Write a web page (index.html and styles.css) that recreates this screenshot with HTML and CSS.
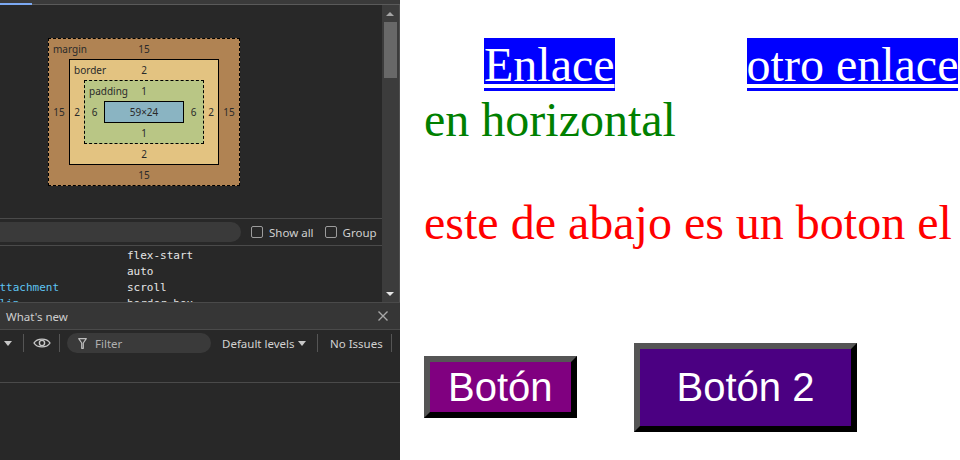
FILE: index.html
```html
<!DOCTYPE html>
<html lang="es">
<head>
<meta charset="utf-8">
<title>Enlaces</title>
<link rel="stylesheet" href="styles.css">
</head>
<body>
<div class="devtools">
  <div class="tabs"><div class="tab-active"></div><div class="tab-rest"></div></div>
  <div class="pane">
    <div class="pane-main">
      <div class="bm-area">
        <div class="bm bm-margin">
          <div class="bm-top"><span class="bm-label">margin</span><span>15</span><span></span></div>
          <div class="bm-side">15</div>
          <div class="bm bm-border">
            <div class="bm-top"><span class="bm-label">border</span><span>2</span><span></span></div>
            <div class="bm-side">2</div>
            <div class="bm bm-padding">
              <div class="bm-top"><span class="bm-label">padding</span><span>1</span><span></span></div>
              <div class="bm-side">6</div>
              <div class="bm-content">59×24</div>
              <div class="bm-side">6</div>
              <div class="bm-bottom">1</div>
            </div>
            <div class="bm-side">2</div>
            <div class="bm-bottom">2</div>
          </div>
          <div class="bm-side">15</div>
          <div class="bm-bottom">15</div>
        </div>
      </div>
      <div class="filter-row">
        <div class="filter-input"></div>
        <label class="check"><span class="box"></span>Show all</label>
        <label class="check"><span class="box"></span>Group</label>
      </div>
      <div class="props">
        <div class="prop"><span class="pname">align-self</span><span class="pval">flex-start</span></div>
        <div class="prop"><span class="pname">aspect-ratio</span><span class="pval">auto</span></div>
        <div class="prop"><span class="pname">background-attachment</span><span class="pval">scroll</span></div>
        <div class="prop"><span class="pname">background-clip</span><span class="pval">border-box</span></div>
      </div>
    </div>
    <div class="scrollbar">
      <div class="sb-btn"><span class="tri-up"></span></div>
      <div class="sb-thumb"></div>
      <div class="sb-space"></div>
      <div class="sb-btn"><span class="tri-down light"></span></div>
    </div>
  </div>
  <div class="drawer-head">
    <span>What's new</span>
    <svg class="close" width="10" height="10" viewBox="0 0 10 10"><path d="M0.5 0.5 L9.5 9.5 M9.5 0.5 L0.5 9.5" stroke="#a8a8a8" stroke-width="1.4" fill="none"/></svg>
  </div>
  <div class="console-bar">
    <div class="tool-row">
      <span class="tri-down small"></span>
      <span class="sep s1"></span>
      <svg class="eye" width="18" height="12" viewBox="0 0 18 12"><path d="M1 6 C4 0.8 14 0.8 17 6 C14 11.2 4 11.2 1 6 Z" stroke="#c8c8c8" stroke-width="1.4" fill="none"/><circle cx="9" cy="6" r="2.6" stroke="#c8c8c8" stroke-width="1.4" fill="none"/></svg>
      <span class="sep s2"></span>
      <div class="cfilter">
        <svg width="9" height="11" viewBox="0 0 9 11"><path d="M0.7 0.7 H8.3 L5.3 5 V10.3 H3.7 V5 Z" stroke="#bdbdbd" stroke-width="1.2" fill="none" stroke-linejoin="round"/></svg>
        <span class="ph">Filter</span>
      </div>
      <span class="levels">Default levels</span>
      <span class="tri-down small lv"></span>
      <span class="sep s3"></span>
      <span class="issues">No Issues</span>
      <span class="sep s4"></span>
    </div>
  </div>
  <div class="console-body"></div>
</div>
<div class="page">
  <div class="links"><a class="link" href="#">Enlace</a> <a class="link" href="#">otro enlace</a></div>
  <div class="green">en horizontal</div>
  <p class="red">este de abajo es un boton el</p>
  <div class="buttons">
    <button class="btn btn1">Botón</button>
    <button class="btn btn2">Botón 2</button>
  </div>
</div>
</body>
</html>
```

FILE: styles.css
```css
* { box-sizing: border-box; }
html, body { margin: 0; padding: 0; }
body {
  width: 960px;
  height: 460px;
  overflow: hidden;
  display: flex;
  background: #ffffff;
}

/* ---------- devtools ---------- */
.devtools {
  width: 400px;
  flex: none;
  height: 460px;
  background: #282828;
  display: flex;
  flex-direction: column;
  font-family: "Noto Sans", "DejaVu Sans", sans-serif;
  font-size: 11.5px;
  color: #d2d2d2;
  overflow: hidden;
}
.tabs {
  height: 5px;
  flex: none;
  display: flex;
  align-items: flex-end;
  background: #3a3a3a;
}
.tab-active { width: 32px; height: 2px; background: #7ca9f2; }
.tab-rest { flex: 1; height: 1px; background: #5a5a5a; }

.pane { height: 297px; flex: none; display: flex; }
.pane-main { flex: 1; display: flex; flex-direction: column; min-width: 0; }

.bm-area {
  height: 214px;
  flex: none;
  padding: 33px 0 0 48px;
  border-bottom: 1px solid #4a4a4a;
}
.bm {
  display: grid;
  color: #2a2a2a;
  font-size: 10px;
  line-height: 12px;
}
.bm-margin {
  width: 192px;
  height: 148px;
  background: #b08353;
  border: 1px dashed #000;
  grid-template-columns: 20px 150px 20px;
  grid-template-rows: 20px 106px 20px;
}
.bm-border {
  background: #e3c381;
  border: 1px solid #000;
  grid-template-columns: 14px 120px 14px;
  grid-template-rows: 20px 64px 20px;
}
.bm-padding {
  background: #b9c685;
  border: 1px dashed #000;
  grid-template-columns: 19px 80px 19px;
  grid-template-rows: 20px 22px 20px;
}
.bm-top {
  grid-column: 1 / 4;
  display: grid;
  grid-template-columns: 1fr auto 1fr;
  align-items: center;
}
.bm-label { padding-left: 4px; }
.bm-side {
  display: flex;
  align-items: center;
  justify-content: center;
}
.bm-bottom {
  grid-column: 1 / 4;
  display: flex;
  align-items: center;
  justify-content: center;
}
.bm-content {
  background: #8ab4c2;
  border: 1px solid #000;
  display: flex;
  align-items: center;
  justify-content: center;
  color: #2a2a2a;
}

.filter-row {
  height: 27px;
  flex: none;
  display: flex;
  align-items: center;
  border-bottom: 1px solid #4a4a4a;
}
.filter-input {
  width: 253px;
  height: 20px;
  margin-left: -12px;
  border-radius: 10px;
  background: #3a3a3a;
  flex: none;
}
.check {
  display: flex;
  align-items: center;
  margin-left: 10px;
  color: #d0d0d0;
  white-space: nowrap;
}
.check + .check { margin-left: 11px; }
.box {
  width: 12px;
  height: 12px;
  border: 1px solid #9c9c9c;
  border-radius: 2px;
  margin-right: 6px;
}

.props {
  height: 56px;
  flex: none;
  overflow: hidden;
  padding-top: 2px;
  font-family: "DejaVu Sans Mono", "Liberation Mono", monospace;
  font-size: 11px;
  line-height: 16px;
}
.prop {
  display: grid;
  grid-template-columns: 207px 1fr;
  margin-left: -80px;
  white-space: nowrap;
}
.pname { color: #5ec4f2; }
.pval { color: #e6e6e6; }

.scrollbar {
  width: 18px;
  flex: none;
  background: #3c3c3c;
  border-right: 1px solid #505050;
  display: flex;
  flex-direction: column;
}
.sb-btn {
  height: 17px;
  flex: none;
  display: flex;
  align-items: center;
  justify-content: center;
  padding-right: 1px;
}
.sb-thumb {
  height: 56px;
  flex: none;
  margin: 0 2px 0 2px;
  background: #686868;
}
.sb-space { flex: 1; }
.tri-up {
  width: 0;
  height: 0;
  border-left: 4px solid transparent;
  border-right: 4px solid transparent;
  border-bottom: 4px solid #a5a5a5;
}
.tri-down {
  width: 0;
  height: 0;
  border-left: 4px solid transparent;
  border-right: 4px solid transparent;
  border-top: 4px solid #a5a5a5;
}
.tri-down.light { border-top-color: #e6e6e6; }
.tri-down.small { border-top: 5px solid #c8c8c8; flex: none; }

.drawer-head {
  height: 28px;
  flex: none;
  display: flex;
  align-items: center;
  justify-content: space-between;
  padding: 0 12px 0 6px;
  background: #363636;
  border-top: 1px solid #4a4a4a;
  border-bottom: 1px solid #4a4a4a;
  color: #cfcfcf;
}

.console-bar {
  height: 53px;
  flex: none;
  border-bottom: 1px solid #4a4a4a;
}
.tool-row {
  height: 26px;
  display: flex;
  align-items: center;
  padding-left: 4px;
  white-space: nowrap;
}
.sep {
  width: 1px;
  height: 18px;
  background: #555555;
  flex: none;
}
.s1 { margin-left: 11px; }
.eye { margin-left: 9px; flex: none; }
.s2 { margin-left: 8px; }
.cfilter {
  margin-left: 7px;
  width: 144px;
  height: 20px;
  border-radius: 10px;
  background: #3a3a3a;
  display: flex;
  align-items: center;
  padding-left: 11px;
  flex: none;
}
.ph { margin-left: 8px; color: #b0b0b0; }
.levels { margin-left: 11px; width: 71px; color: #d2d2d2; flex: none; }
.lv { margin-left: 5px; }
.s3 { margin-left: 11px; }
.issues { margin-left: 12px; width: 51px; color: #d2d2d2; flex: none; }
.s4 { margin-left: 10px; }
.console-body { flex: 1; }

/* ---------- page ---------- */
.page {
  flex: 1;
  min-width: 0;
  height: 460px;
  overflow: hidden;
  background: #ffffff;
  padding: 37px 0 0 24px;
  font-family: "Liberation Serif", "Times New Roman", serif;
  font-size: 48px;
}
.links { white-space: nowrap; }
.link {
  margin: 0 60px;
  background: #0000ff;
  color: #ffffff;
  text-decoration: underline;
}
.green { color: #008000; white-space: nowrap; }
.red { color: #ff0000; margin: 48px 0 0; white-space: nowrap; }
.buttons {
  margin-top: 93px;
  display: flex;
  align-items: baseline;
  gap: 57px;
}
.btn {
  font-family: "Liberation Sans", Arial, sans-serif;
  font-size: 40px;
  line-height: normal;
  color: #ffffff;
  border-width: 6px;
  border-style: solid;
  border-color: #555555 #000000 #000000 #555555;
  margin: 0;
  white-space: nowrap;
}
.btn1 { background: #800080; padding: 3px 18px 2px; }
.btn2 { background: #4b0082; padding: 16px 37px; }
```
